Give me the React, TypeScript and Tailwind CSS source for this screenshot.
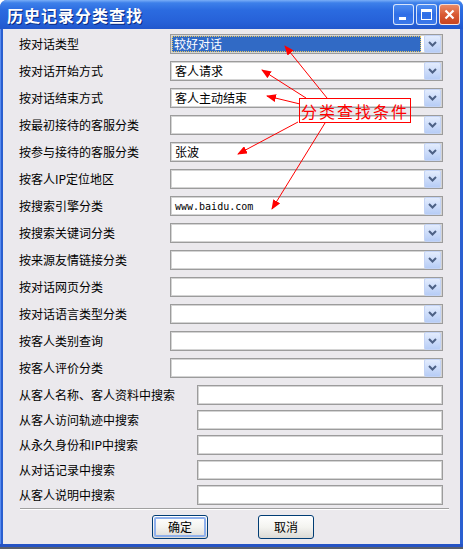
const cjk = { fontFamily: '"Noto Sans CJK SC", "Noto Sans", sans-serif' };

const comboRows: { label: string; value?: string; mono?: boolean; selected?: boolean }[] = [
  { label: '按对话类型', value: '较好对话', selected: true },
  { label: '按对话开始方式', value: '客人请求' },
  { label: '按对话结束方式', value: '客人主动结束' },
  { label: '按最初接待的客服分类' },
  { label: '按参与接待的客服分类', value: '张波' },
  { label: '按客人IP定位地区' },
  { label: '按搜索引擎分类', value: 'www.baidu.com', mono: true },
  { label: '按搜索关键词分类' },
  { label: '按来源友情链接分类' },
  { label: '按对话网页分类' },
  { label: '按对话语言类型分类' },
  { label: '按客人类别查询' },
  { label: '按客人评价分类' },
];

const textRows = [
  '从客人名称、客人资料中搜索',
  '从客人访问轨迹中搜索',
  '从永久身份和IP中搜索',
  '从对话记录中搜索',
  '从客人说明中搜索',
];

const DropButton = () => (
  <div className="w-[17px] h-[18px] shrink-0 rounded-[2px] border border-[#c3d3f5] bg-gradient-to-b from-[#e3ecfd] to-[#b7cdf6] flex items-center justify-center">
    <svg width="9" height="6" viewBox="0 0 9 6">
      <polyline points="1,1 4.5,4.5 8,1" fill="none" stroke="#4d6185" strokeWidth="2" />
    </svg>
  </div>
);

const Combo = ({ value, mono, selected }: { value?: string; mono?: boolean; selected?: boolean }) => (
  <div className="w-[273px] h-[20px] shrink-0 border border-[#9c9c9c] bg-white flex items-center pl-[1px] pr-[1px] shadow-[inset_0_0_0_1px_#d4d4d4]">
    <div className="flex-1 h-[16px] flex items-center">
      {selected ? (
        <div className="w-full h-[16px] bg-[#316ac5] border border-dotted border-[#e8c860] text-white text-[12px] leading-[14px] pl-[1px]" style={cjk}>
          {value}
        </div>
      ) : mono ? (
        <span className="text-[10px] pl-[3px] text-black" style={{ fontFamily: '"DejaVu Sans Mono", "Liberation Mono", monospace' }}>
          {value}
        </span>
      ) : (
        <span className="text-[12px] pl-[3px] text-black" style={cjk}>
          {value}
        </span>
      )}
    </div>
    <div className="ml-[3px]">
      <DropButton />
    </div>
  </div>
);

const TitleButton = ({ kind }: { kind: 'min' | 'max' | 'close' }) => {
  const base = 'w-[21px] h-[21px] rounded-[3px] border border-white/80 flex items-center justify-center';
  if (kind === 'close')
    return (
      <div className={`${base} bg-gradient-to-b from-[#e98a66] via-[#d95a33] to-[#c84420]`}>
        <svg width="11" height="11" viewBox="0 0 11 11">
          <path d="M1.5 1.5 L9.5 9.5 M9.5 1.5 L1.5 9.5" stroke="white" strokeWidth="2.2" />
        </svg>
      </div>
    );
  return (
    <div className={`${base} bg-gradient-to-b from-[#4d8cf0] via-[#2f6ee6] to-[#3b78ea]`}>
      {kind === 'min' ? (
        <div className="w-[7px] h-[3px] bg-white mt-[8px] -ml-[3px]" />
      ) : (
        <div className="w-[11px] h-[11px] border border-white border-t-[3px]" />
      )}
    </div>
  );
};

const XpButton = ({ label, isDefault }: { label: string; isDefault?: boolean }) => (
  <div className="w-[56px] h-[24px] rounded-[3px] border border-[#003c74] bg-gradient-to-b from-white via-[#f4f4f0] to-[#dcdad5] p-[1px]">
    <div
      className={`w-full h-full rounded-[2px] flex items-center justify-center text-[12px] text-black ${isDefault ? 'border-2 border-[#8fb0ec]' : ''}`}
      style={cjk}
    >
      {label}
    </div>
  </div>
);

export default function App() {
  return (
    <div className="w-[463px] h-[549px] relative overflow-hidden bg-white">
      <div className="w-[463px] h-[549px] flex flex-col rounded-t-[7px] overflow-hidden bg-[#2a5fd0]">
        {/* title bar */}
        <div className="h-[29px] shrink-0 flex items-center pl-[7px] pr-[3px] bg-[linear-gradient(to_bottom,#7aaef7_0%,#3d80ea_10%,#2b6be0_35%,#2661d8_75%,#2157cc_100%)]">
          <span
            className="text-white text-[16px] font-bold tracking-[1px] flex-1 [text-shadow:1px_1px_0_#0a2a80]"
            style={cjk}
          >
            历史记录分类查找
          </span>
          <div className="flex gap-[2px]">
            <TitleButton kind="min" />
            <TitleButton kind="max" />
            <TitleButton kind="close" />
          </div>
        </div>

        {/* client area */}
        <div className="flex-1 flex px-[3px] bg-[#2a5fd0] border-l border-[#5a8cf0]">
          <div className="flex-1 bg-[#ebe9ed] flex flex-col pt-[5px] pb-[5px] -ml-[1px]">
            <div className="flex flex-col gap-[7px]">
              {comboRows.map((r) => (
                <div key={r.label} className="h-[20px] flex items-center">
                  <span className="w-[167px] shrink-0 pl-[16px] text-[12px] text-black whitespace-nowrap" style={cjk}>
                    {r.label}
                  </span>
                  <Combo value={r.value} mono={r.mono} selected={r.selected} />
                </div>
              ))}
            </div>
            <div className="flex flex-col gap-[5px] mt-[7px]">
              {textRows.map((t) => (
                <div key={t} className="h-[20px] flex items-center">
                  <span className="w-[194px] shrink-0 pl-[16px] text-[12px] text-black whitespace-nowrap" style={cjk}>
                    {t}
                  </span>
                  <div className="w-[246px] h-[20px] shrink-0 border border-[#9c9c9c] bg-white shadow-[inset_0_0_0_1px_#d4d4d4]" />
                </div>
              ))}
            </div>
            <div className="mt-[3px] ml-[17px] w-[429px] h-[2px] border-t border-[#a0a0a0] border-b border-b-white" />
            <div className="mt-[5px] flex pl-[149px] gap-[50px]">
              <XpButton label="确定" isDefault />
              <XpButton label="取消" />
            </div>
          </div>
        </div>
        <div className="h-[3px] shrink-0 bg-[#2553c4]" />
        <div className="h-[2px] shrink-0 bg-[#5a5f6a]" />
      </div>

      {/* annotation overlay */}
      <svg className="absolute inset-0 pointer-events-none" width="463" height="549">
        <defs>
          <marker id="ah" markerWidth="10" markerHeight="8" refX="9" refY="4" orient="auto" markerUnits="userSpaceOnUse">
            <path d="M0,0 L10,4 L0,8 z" fill="#ff0000" />
          </marker>
        </defs>
        <g stroke="#ff0000" strokeWidth="1" fill="none" markerEnd="url(#ah)">
          <line x1="327" y1="98" x2="285" y2="46" />
          <line x1="306" y1="98" x2="262" y2="70" />
          <line x1="300" y1="104" x2="267" y2="96" />
          <line x1="298" y1="122" x2="238" y2="154" />
          <line x1="325" y1="123" x2="272" y2="209" />
        </g>
      </svg>
      <div
        className="absolute left-[299px] top-[98px] w-[112px] h-[25px] border border-[#ff0000] flex items-center justify-center text-[#ff0000] text-[16px] tracking-[2px]"
        style={cjk}
      >
        分类查找条件
      </div>
    </div>
  );
}
